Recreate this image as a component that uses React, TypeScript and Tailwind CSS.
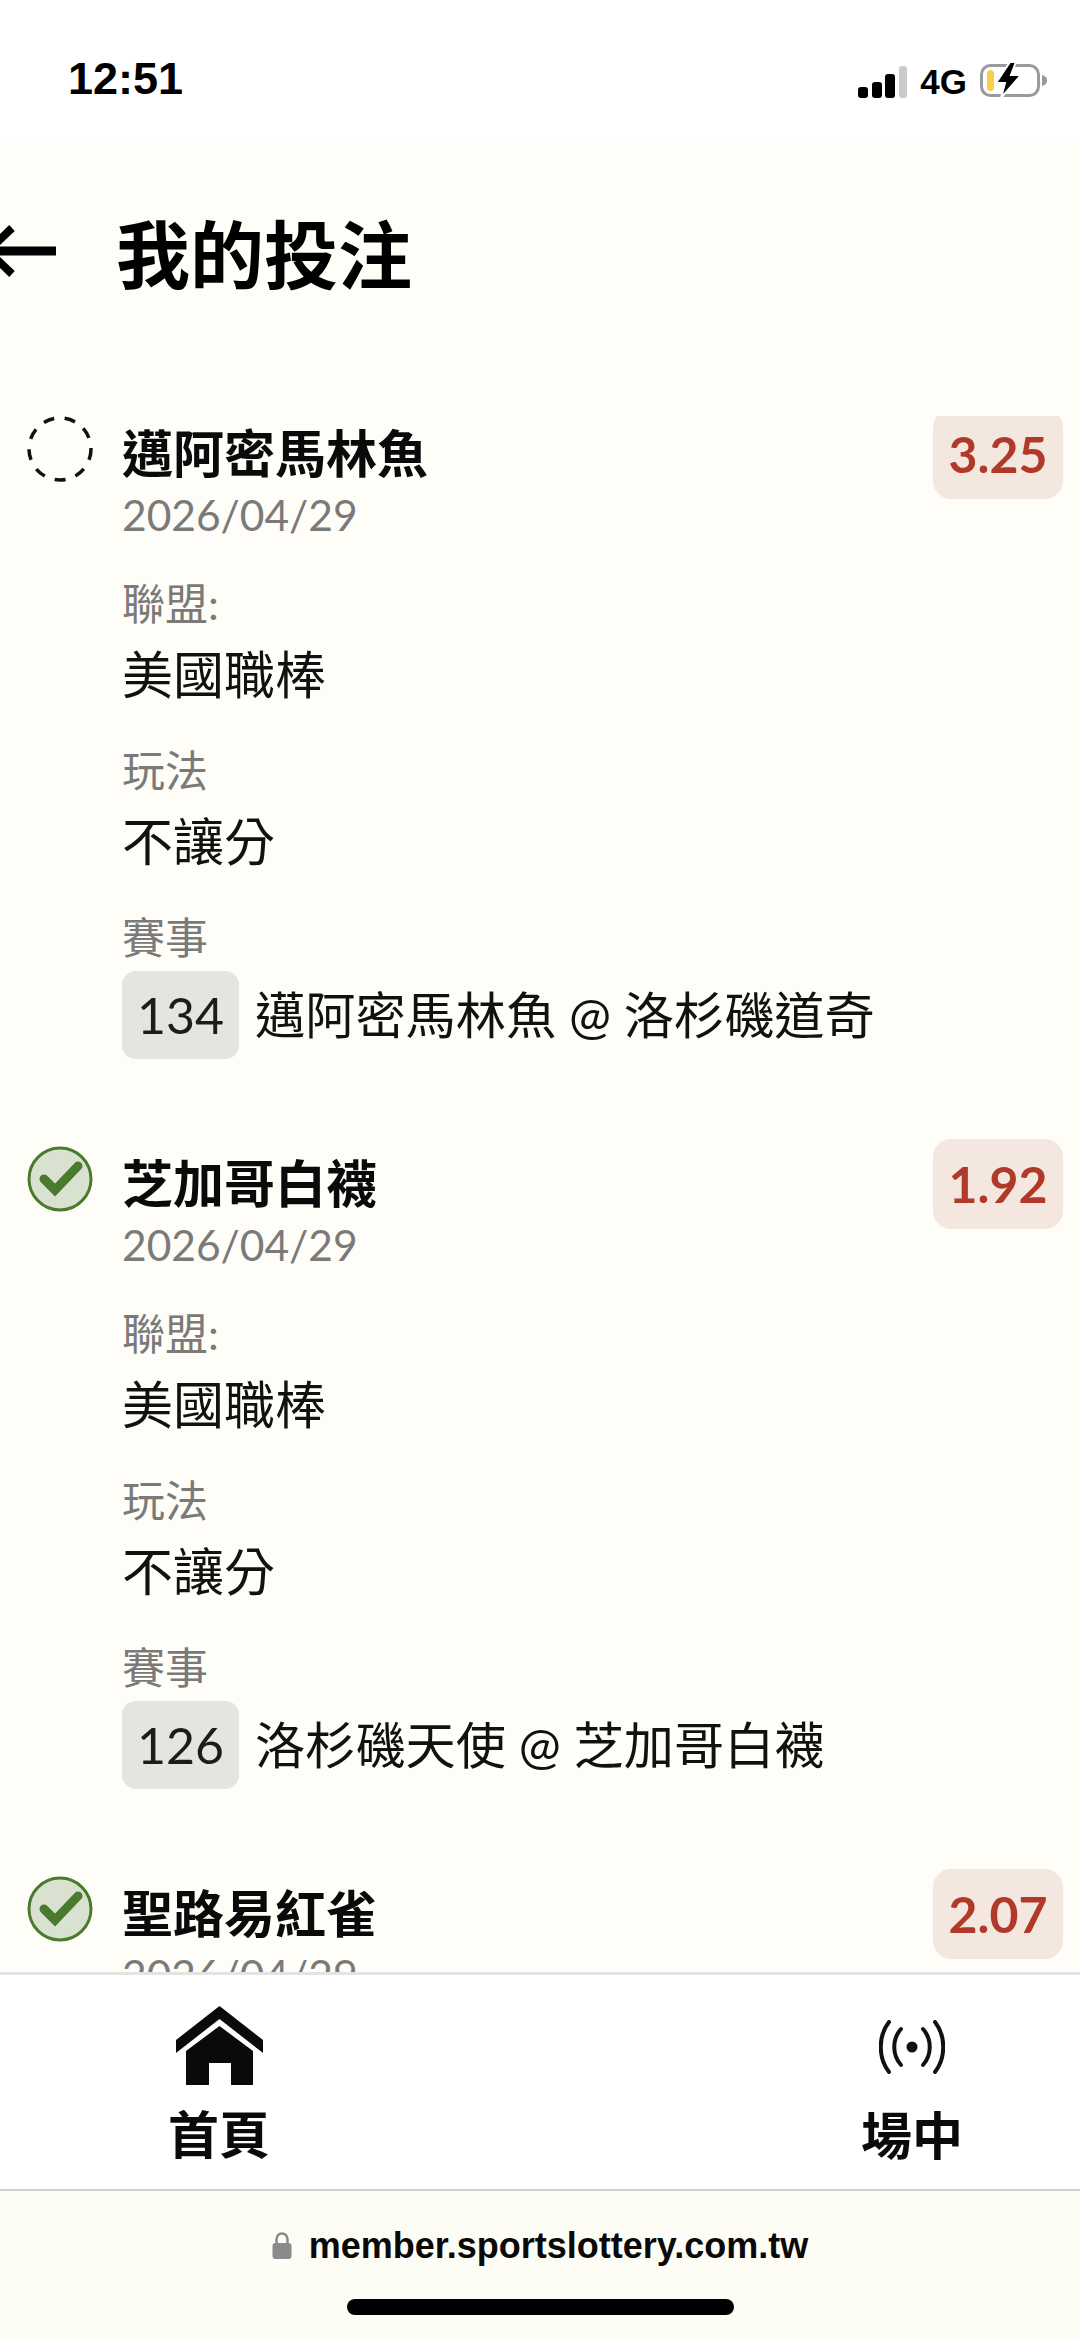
const font = "font-['Lato','Noto_Sans_CJK_TC',sans-serif]";

function Dashed() {
  return (
    <svg width="66" height="66" viewBox="0 0 66 66" className="block">
      <circle cx="33" cy="33" r="31" fill="none" stroke="#111" strokeWidth="3.5" strokeDasharray="11 10.5" />
    </svg>
  );
}

function Check() {
  return (
    <svg width="66" height="66" viewBox="0 0 66 66" className="block">
      <circle cx="33" cy="33" r="31" fill="#d9e2d0" stroke="#4a7a2e" strokeWidth="3" />
      <path d="M17 33 L28 44 L51 20" fill="none" stroke="#4a7a2e" strokeWidth="9" strokeLinecap="round" strokeLinejoin="miter" />
    </svg>
  );
}

type Bet = { name: string; odds: string; done: boolean; num: string; match: string };
const bets: Bet[] = [
  { name: "邁阿密馬林魚", odds: "3.25", done: false, num: "134", match: "邁阿密馬林魚 @ 洛杉磯道奇" },
  { name: "芝加哥白襪", odds: "1.92", done: true, num: "126", match: "洛杉磯天使 @ 芝加哥白襪" },
  { name: "聖路易紅雀", odds: "2.07", done: true, num: "", match: "" },
];

function Field({ label, value }: { label: string; value: string }) {
  return (
    <div className="mb-[40px]">
      <div className="h-[56px] text-[43px] leading-[56px] text-[#7a7a78]">{label}</div>
      <div className="mt-[15px] h-[56px] text-[51px] leading-[56px] text-[#111]">{value}</div>
    </div>
  );
}

function Item({ bet }: { bet: Bet }) {
  return (
    <div className="flex h-[730px] items-start pl-[27px] pr-[17px]">
      <div className="mt-[7px] w-[66px] shrink-0">{bet.done ? <Check /> : <Dashed />}</div>
      <div className="ml-[29px] min-w-0 flex-1 pt-[15px]">
        <div className="h-[60px] text-[51px] font-bold leading-[60px] text-[#0a0a0a]">{bet.name}</div>
        <div className="mt-[3px] h-[56px] text-[42.5px] leading-[56px] text-[#7a7a78]">2026/04/29</div>
        {bet.num && (
          <div className="mt-[33px]">
            <Field label="聯盟:" value="美國職棒" />
            <Field label="玩法" value="不讓分" />
            <div className="h-[56px] text-[43px] leading-[56px] text-[#7a7a78]">賽事</div>
            <div className="mt-[5px] flex items-center">
              <span className="flex h-[88px] w-[117px] items-center justify-center rounded-[14px] bg-[#e5e4df] text-[50px] text-[#1c1c1c]">{bet.num}</span>
              <span className="ml-[16px] text-[50.2px] text-[#111]">{bet.match}</span>
            </div>
          </div>
        )}
      </div>
      <div className="flex h-[90px] w-[130px] shrink-0 items-center justify-center rounded-[18px] bg-[#f4e7e0] text-[50px] font-bold text-[#b03a2a]">{bet.odds}</div>
    </div>
  );
}

export default function App() {
  return (
    <div className={`flex h-[2339px] w-[1080px] flex-col overflow-hidden bg-[#fffdf7] ${font}`}>
      <div className="flex h-[143px] shrink-0 items-start bg-white pl-[68px] pr-[32px] pt-[54px]">
        <span className="font-['Liberation_Sans',sans-serif] text-[45px] font-bold leading-[50px] text-black">12:51</span>
        <div className="ml-auto mt-[8px] flex items-end">
          <svg width="49" height="32" viewBox="0 0 49 32" className="block">
            <rect x="0" y="21" width="10" height="11" rx="3" fill="#000" />
            <rect x="14" y="16" width="10" height="16" rx="3" fill="#000" />
            <rect x="27" y="8" width="10" height="24" rx="3" fill="#000" />
            <rect x="41" y="0" width="8" height="32" rx="3" fill="#cbcbcb" />
          </svg>
          <span className="ml-[13px] font-['Liberation_Sans',sans-serif] text-[35px] font-bold leading-[32px] text-black">4G</span>
          <svg width="68" height="36" viewBox="0 0 68 36" className="ml-[13px] block">
            <rect x="1.5" y="3.5" width="57" height="30" rx="9" fill="none" stroke="#9a9a9a" strokeWidth="3" />
            <path d="M62 13 C66 14 67 16 67 18.500 C67 21 66 23 62 24 Z" fill="#9a9a9a" />
            <rect x="7" y="8" width="7" height="21" rx="3.5" fill="#f6d145" />
            <path d="M30 0 L16 21 L25 21 L21 36 L41 13 L31 13 L36 0 Z" fill="#000" stroke="#fff" strokeWidth="2" />
          </svg>
        </div>
      </div>

      <div className="flex h-[273px] shrink-0 items-start">
        <svg width="60" height="60" viewBox="0 0 60 60" className="mt-[82px] block shrink-0">
          <path d="M0 26 H56" stroke="#000" strokeWidth="9" fill="none" />
          <path d="M-12 26 L12 3 M-12 26 L12 49" stroke="#000" strokeWidth="8" fill="none" />
        </svg>
        <h1 className="ml-[56px] mt-[68px] text-[74px] font-bold leading-[88px] text-black">我的投注</h1>
      </div>

      <div className="min-h-0 flex-1 overflow-hidden">
        <div className="-mt-[7px]">
          {bets.map((b) => (
            <Item key={b.name} bet={b} />
          ))}
        </div>
      </div>

      <nav className="flex h-[217px] shrink-0 items-start justify-between border-t-[3px] border-[#e4e4e2] bg-white pl-[167px] pr-[116px]">
        <div className="flex w-[104px] flex-col items-center">
          <svg width="87" height="79" viewBox="0 0 87 79" className="mt-[31px] block">
            <path d="M43.500 0 L87 34 V47 L43.500 13 L0 47 V34 Z" fill="#0a0a0a" />
            <path d="M43.500 20 L77 45 V79 H55 V57 H33 V79 H10 V45 Z" fill="#0a0a0a" />
          </svg>
          <span className="mt-[22px] text-[51px] font-bold leading-[56px] text-[#0a0a0a]">首頁</span>
        </div>
        <div className="flex w-[104px] flex-col items-center">
          <svg width="66" height="54" viewBox="0 0 66 54" className="mt-[45px] block">
            <circle cx="33" cy="27" r="5.5" fill="#111" />
            <path d="M22 9 C13 19 13 35 22 45 M44 9 C53 19 53 35 44 45" fill="none" stroke="#111" strokeWidth="4" strokeLinecap="round" />
            <path d="M10 2 C-1 16 -1 38 10 52 M56 2 C67 16 67 38 56 52" fill="none" stroke="#111" strokeWidth="4" strokeLinecap="round" />
          </svg>
          <span className="mt-[34px] text-[51px] font-bold leading-[56px] text-[#0a0a0a]">場中</span>
        </div>
      </nav>

      <div className="flex h-[150px] shrink-0 flex-col items-center border-t-2 border-[#d2cfca] bg-[#fdfcf5]">
        <div className="mt-[33px] flex items-center">
          <svg width="20" height="28" viewBox="0 0 20 28" className="block">
            <path d="M4.500 12 V7 a5.500 5.500 0 0 1 11 0 V12" fill="none" stroke="#8a8a8a" strokeWidth="2.500" />
            <rect x="0.500" y="11" width="19" height="16" rx="3" fill="#8a8a8a" />
          </svg>
          <span className="ml-[17px] font-['Liberation_Sans',sans-serif] text-[36px] font-bold leading-[44px] text-[#0a0a0a]">member.sportslottery.com.tw</span>
        </div>
        <div className="mt-[31px] h-[16px] w-[387px] rounded-full bg-black" />
      </div>
    </div>
  );
}
